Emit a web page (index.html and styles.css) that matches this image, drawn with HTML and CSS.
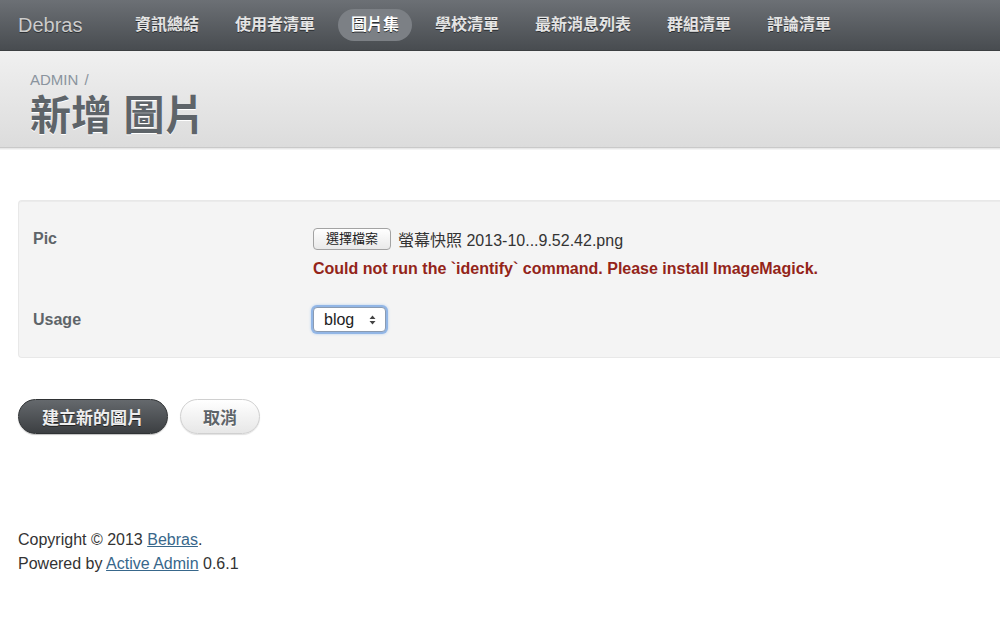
FILE: index.html
```html
<!DOCTYPE html>
<html lang="zh-Hant">
<head>
<meta charset="utf-8">
<title>新增 圖片</title>
<link rel="stylesheet" href="styles.css">
</head>
<body>
<header class="topbar">
  <div class="brand">Debras</div>
  <nav class="tabs">
    <a class="tab">資訊總結</a>
    <a class="tab">使用者清單</a>
    <a class="tab active">圖片集</a>
    <a class="tab">學校清單</a>
    <a class="tab">最新消息列表</a>
    <a class="tab">群組清單</a>
    <a class="tab">評論清單</a>
  </nav>
</header>
<div class="titlebar">
  <div class="crumbs">ADMIN <span class="sep">/</span></div>
  <h1 class="title">新增 圖片</h1>
</div>
<main class="main">
  <form class="form">
    <div class="fieldset">
      <div class="row row-pic">
        <label class="label">Pic</label>
        <div class="field">
          <div class="file">
            <span class="file-btn">選擇檔案</span>
            <span class="file-name">螢幕快照 2013-10...9.52.42.png</span>
          </div>
          <p class="error">Could not run the `identify` command. Please install ImageMagick.</p>
        </div>
      </div>
      <div class="row row-usage">
        <label class="label">Usage</label>
        <div class="field">
          <div class="select">
            <span>blog</span>
            <svg class="arrows" width="7" height="10" viewBox="0 0 7 10"><path d="M3.5 0.5 L6.5 4 L0.5 4 Z M3.5 9.5 L6.5 6 L0.5 6 Z" fill="#444"/></svg>
          </div>
        </div>
      </div>
    </div>
    <div class="actions">
      <button type="button" class="btn primary">建立新的圖片</button>
      <button type="button" class="btn secondary">取消</button>
    </div>
  </form>
  <footer class="footer">
    <p>Copyright © 2013 <a href="#">Bebras</a>.</p>
    <p>Powered by <a href="#">Active Admin</a> 0.6.1</p>
  </footer>
</main>
</body>
</html>
```

FILE: styles.css
```css
* { box-sizing: border-box; }
html, body { margin: 0; padding: 0; }
body {
  font-family: "Liberation Sans", "Noto Sans CJK TC", Arial, sans-serif;
  background: #fff;
  color: #333;
  width: 1000px;
  overflow: hidden;
}

.topbar {
  height: 51px;
  background: linear-gradient(#6c7075, #484c50);
  border-bottom: 1px solid #3c3f42;
  display: flex;
  align-items: center;
  padding-left: 18px;
  box-shadow: 0 1px 0 #d6d6d6;
}
.brand {
  font-size: 20px;
  color: #cdcdcd;
  text-shadow: 0 1px 0 #2e3134;
  width: 104px;
}
.tabs { display: flex; gap: 10px; }
.tab {
  font-size: 16px;
  font-weight: bold;
  color: #e4e4e4;
  text-shadow: 0 1px 0 #2c2f32;
  padding: 0 13px;
  height: 32px;
  line-height: 32px;
  border-radius: 16px;
}
.tab.active {
  background: #7c8085;
  color: #fff;
}

.titlebar {
  height: 97px;
  background: linear-gradient(#f0f0f0, #dcdcdc);
  border-bottom: 1px solid #c9c9c9;
  box-shadow: 0 1px 0 #e8e8e8, 0 2px 0 #f4f4f4;
  padding: 20px 30px 0;
}
.crumbs {
  font-size: 15px;
  line-height: 18px;
  color: #8a949e;
}
.crumbs .sep { margin-left: 2px; }
.title {
  margin: 2px 0 0;
  font-size: 41px;
  line-height: 50px;
  font-weight: bold;
  color: #5e6469;
  text-shadow: 0 1px 0 #fff;
}

.main { padding: 52px 0 0 18px; }

.fieldset {
  background: #f4f4f4;
  border: 1px solid #e8e8e8;
  border-right: none;
  border-radius: 4px 0 0 4px;
  box-shadow: inset 0 1px 0 #ebebeb;
  padding: 27px 0 25px 14px;
}
.row { display: flex; }
.row-usage { margin-top: 28px; }
.label {
  width: 280px;
  flex: none;
  font-size: 16px;
  font-weight: bold;
  color: #5e6469;
  line-height: 22px;
}
.row-usage .label { line-height: 25px; }
.field { flex: 1; }
.file { display: flex; align-items: center; height: 22px; }
.file-btn {
  display: inline-block;
  height: 22px;
  line-height: 20px;
  padding: 0 12px;
  font-size: 13px;
  color: #222;
  background: linear-gradient(#ffffff, #e9e9e9);
  border: 1px solid #a3a3a3;
  border-radius: 4px;
}
.file-name {
  margin-left: 7px;
  font-size: 16px;
  color: #333;
}
.error {
  margin: 9px 0 0;
  font-size: 16px;
  line-height: 20px;
  font-weight: bold;
  color: #932419;
}
.select {
  width: 73px;
  height: 25px;
  display: flex;
  align-items: center;
  justify-content: space-between;
  padding: 0 9px 0 10px;
  font-size: 16px;
  color: #222;
  background: #fff;
  border: 1px solid #8a9bb2;
  border-radius: 4px;
  box-shadow: 0 0 0 2px #92b6e6, 0 0 3px 2px #b4cfef;
}

.actions {
  display: flex;
  gap: 12px;
  margin-top: 41px;
}
.btn {
  height: 35px;
  border-radius: 18px;
  font-family: inherit;
  font-size: 17px;
  font-weight: bold;
  padding: 0 23px;
  cursor: pointer;
}
.btn.primary {
  color: #eee;
  background: linear-gradient(#65696d, #3c3f42);
  border: 1px solid #2f3234;
  text-shadow: 0 1px 0 #222;
  box-shadow: 0 1px 1px rgba(0,0,0,0.25);
}
.btn.secondary {
  color: #5e6469;
  background: linear-gradient(#ffffff, #e7e7e7);
  border: 1px solid #d0d0d0;
  box-shadow: 0 1px 1px rgba(0,0,0,0.12);
  text-shadow: 0 1px 0 #fff;
  padding: 0 22px;
}

.footer { margin-top: 94px; }
.footer p {
  margin: 0;
  font-size: 16px;
  line-height: 24px;
  color: #333;
}
.footer a { color: #38678b; text-decoration: underline; }
```
